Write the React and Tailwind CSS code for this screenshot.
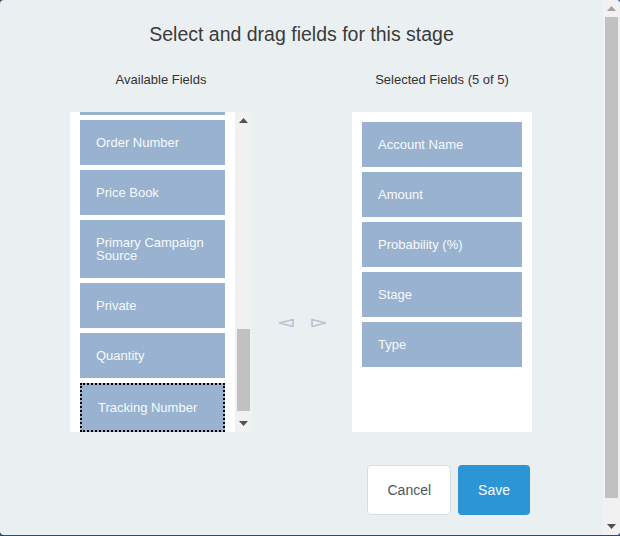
import React, { useLayoutEffect, useRef } from 'react';

const availableFields = [
  'Close Date',
  'Contract',
  'Created By',
  'Created Date',
  'Current Generator(s)',
  'Delivery/Installation Status',
  'Description',
  'Expected Revenue',
  'Forecast Category',
  'Last Modified By',
  'Lead Source',
  'Main Competitor(s)',
  'Next Step',
  'Opportunity Currency',
  'Opportunity Name',
  'Opportunity Owner',
  'Order Number',
  'Price Book',
  'Primary Campaign Source',
  'Private',
  'Quantity',
  'Tracking Number'
];

const selectedFields = ['Account Name', 'Amount', 'Probability (%)', 'Stage', 'Type'];

const FieldItem = ({ label, focused, last }) => (
  <div
    className={`bg-[#98b2cf] text-[#f7fafc] text-[13px] leading-[13px] px-4 py-4 ${
      focused ? 'border-2 border-dotted border-black' : ''
    } ${last ? '' : 'mb-[5px]'}`}
  >
    {label}
  </div>
);

const LeftArrow = () => (
  <svg width="17" height="10" viewBox="0 0 17 10">
    <polygon points="1.5,5 15,1.5 15,8.5" fill="none" stroke="#b5c3d1" strokeWidth="1.6" strokeLinejoin="round" />
  </svg>
);

const RightArrow = () => (
  <svg width="17" height="10" viewBox="0 0 17 10">
    <polygon points="15.5,5 2,1.5 2,8.5" fill="none" stroke="#b5c3d1" strokeWidth="1.6" strokeLinejoin="round" />
  </svg>
);

const Tri = ({ down, color }) => (
  <svg width="9" height="5" viewBox="0 0 9 5">
    <polygon points={down ? '0,0 9,0 4.5,5' : '0,5 9,5 4.5,0'} fill={color} />
  </svg>
);

// scrollbar drawn as plain boxes (the browser paints none)
const ScrollBar = ({ height, thumbTop, thumbHeight, upColor, downColor }) => (
  <div className="relative w-[17px] shrink-0 bg-[#f1f1f1]" style={{ height }}>
    <div className="h-[17px] flex items-center justify-center">
      <Tri color={upColor} />
    </div>
    <div
      className="absolute left-[2px] right-[2px] bg-[#c1c1c1]"
      style={{ top: thumbTop, height: thumbHeight }}
    />
    <div className="absolute bottom-0 left-0 right-0 h-[17px] flex items-center justify-center">
      <Tri down color={downColor} />
    </div>
  </div>
);

export default function App() {
  const listRef = useRef(null);

  // list sits scrolled to its end
  useLayoutEffect(() => {
    if (listRef.current) listRef.current.scrollTop = listRef.current.scrollHeight;
  }, []);

  return (
    <div className="h-[536px] w-[620px] bg-[#2e4a6e] font-['Liberation_Sans',Arial,sans-serif]">
      <div className="h-[535px] w-[620px] rounded-[4px] bg-[#eaeff2] overflow-hidden flex">
        <div className="w-[603px] h-[535px] overflow-hidden pt-[22px]">
          <h1 className="text-center text-[19.5px] leading-6 text-[#3b3b3b]">
            Select and drag fields for this stage
          </h1>

          <div className="mt-[26px] flex pl-[70px]">
            <div className="w-[182px] text-center text-[13px] leading-4 text-[#333]">Available Fields</div>
            <div className="w-[100px]" />
            <div className="w-[180px] text-center text-[13px] leading-4 text-[#333]">Selected Fields (5 of 5)</div>
          </div>

          <div className="mt-[24px] flex pl-[70px]">
            <div className="flex w-[182px] h-[320px]">
              <div ref={listRef} className="w-[165px] h-[320px] bg-white overflow-hidden px-[10px] pt-[10px]">
                {availableFields.map((f, i) => (
                  <FieldItem
                    key={f}
                    label={f}
                    focused={f === 'Tracking Number'}
                    last={i === availableFields.length - 1}
                  />
                ))}
              </div>
              <ScrollBar height={320} thumbTop={217} thumbHeight={82} upColor="#505050" downColor="#505050" />
            </div>

            <div className="w-[100px] flex items-start justify-center gap-[15px] pt-[206px]">
              <LeftArrow />
              <RightArrow />
            </div>

            <div className="w-[180px] h-[320px] bg-white p-[10px]">
              {selectedFields.map((f) => (
                <FieldItem key={f} label={f} />
              ))}
            </div>
          </div>

          <div className="mt-[33px] flex justify-end gap-[7px] pr-[73px]">
            <button className="h-[50px] px-[19px] rounded-[4px] border border-[#d6dce2] bg-white text-[14px] text-[#4a5663]">
              Cancel
            </button>
            <button className="h-[50px] px-5 rounded-[4px] bg-[#2b95d6] text-[14px] text-white">
              Save
            </button>
          </div>
        </div>
        <ScrollBar height={535} thumbTop={17} thumbHeight={481} upColor="#a3a3a3" downColor="#505050" />
      </div>
    </div>
  );
}
